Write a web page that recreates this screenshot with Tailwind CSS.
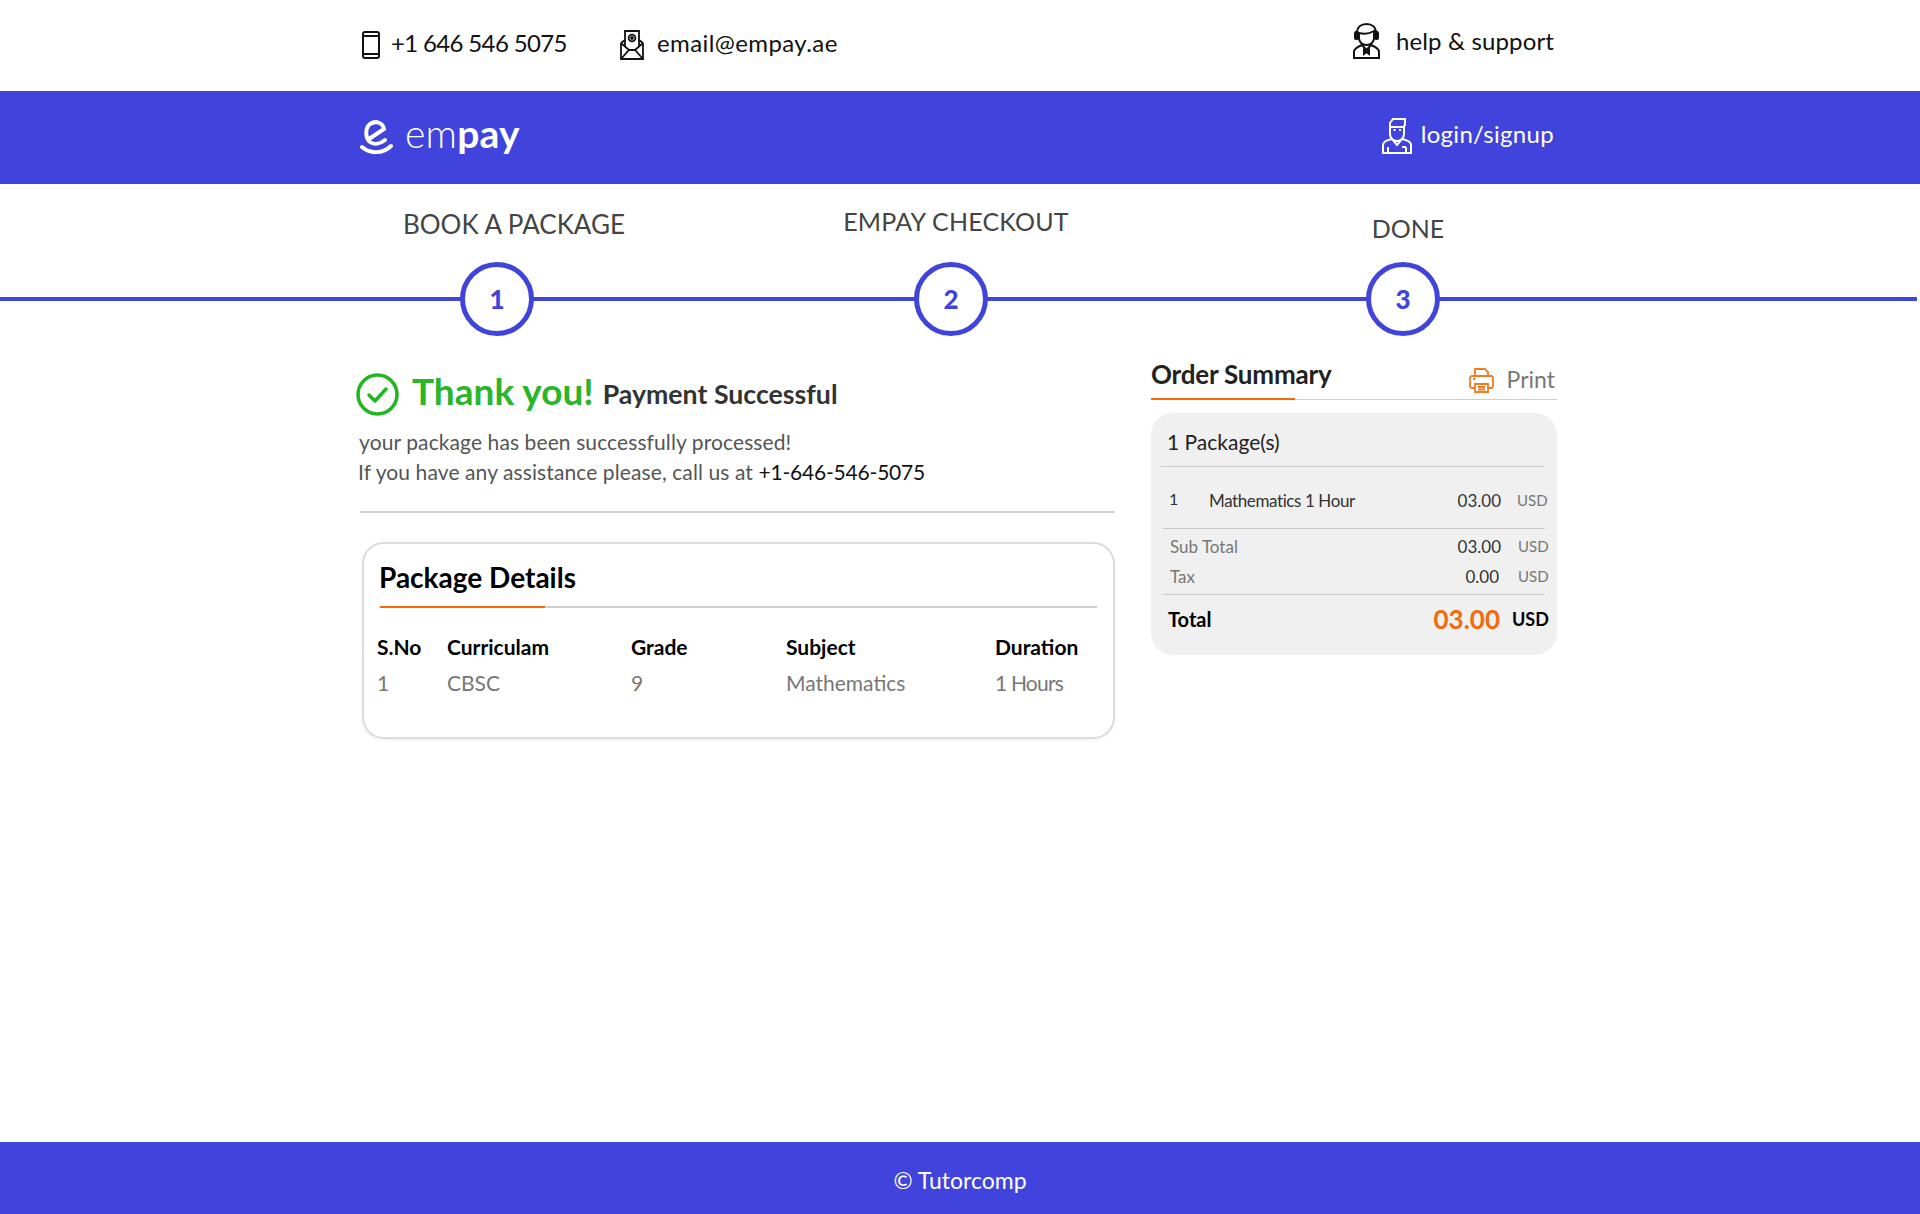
<!DOCTYPE html>
<html lang="en">
<head>
  <meta charset="UTF-8" />
  <title>empay</title>
  <script src="https://cdn.jsdelivr.net/npm/@tailwindcss/browser@4"></script>
</head>
<body class="bg-white font-[Lato,sans-serif] h-[1214px] flex flex-col overflow-hidden">

  <!-- contact bar -->
  <div class="h-[91px] pl-[362px] pr-[366px] flex items-center text-[24px] text-[#111]">
    <svg class="w-[18px] h-[28px] mr-[11px] mb-[2px]" viewBox="0 0 18 28" fill="none" stroke="#111" stroke-width="2"><rect x="1" y="1" width="16" height="26" rx="2"/><path d="M1 5h16M1 23h16"/></svg>
    <span class="w-[229px] mb-[5px] tracking-[-0.65px]">+1 646 546 5075</span>
    <svg class="w-[24px] h-[30px] mr-[13px] mb-[2px]" viewBox="0 0 24 30" fill="none" stroke="#111" stroke-width="1.8"><path d="M1 13v16h22V13M5 16V1h14v15M1 13l4-3M23 13l-4-3M1 29l8-9h6l8 9M1 13l8 7M23 13l-8 7"/><circle cx="12" cy="8" r="3.4"/><circle cx="12" cy="8" r="1" fill="#111"/></svg>
    <span class="mb-[6px] tracking-[0.4px]">email@empay.ae</span>
    <svg class="ml-auto w-[27px] h-[36px] mr-[16px] mb-[9px]" viewBox="0 0 27 36" fill="none" stroke="#111" stroke-width="2"><path d="M4 15V10C4 4 8 1 13.500 1S23 4 23 10v5"/><rect x="2" y="9" width="3" height="7" rx="1"/><rect x="22" y="9" width="3" height="7" rx="1"/><path d="M6 10c4 1 10 1 15-2v7c0 4-3 7-7.500 7S6 19 6 15z"/><path d="M1 35v-6c0-3 3-5 8-7l4.500 5 4.500-5c5 2 8 4 8 7v6zM11 27l2.500 2 2.500-2v4l-2.500-2-2.500 2z"/></svg>
    <span class="mb-[10px] tracking-[0.13px]">help &amp; support</span>
  </div>

  <!-- brand bar -->
  <div class="h-[93px] bg-[#4044dd] pl-[360px] pr-[366px] flex items-center text-white">
    <svg class="w-[33px] h-[36px] mr-[12px] mb-[2px]" viewBox="0 0 33 36" fill="none" stroke="#fff" stroke-width="4" stroke-linecap="round"><path d="M9 20L24 10C23 4 16 1 10 5C5 9 5 19 10 23C14 26 20 25 25 21"/><path d="M2 28C10 35 23 35 31 27"/></svg>
    <span class="text-[39px] leading-none font-light mb-[9px] tracking-[0.2px]">em<span class="font-bold">pay</span></span>
    <svg class="ml-auto w-[30px] h-[36px] mr-[9px] mb-[3px]" viewBox="0 0 30 36" fill="none" stroke="#fff" stroke-width="2"><path d="M8 16V5l3-4h12v6l-1 1v8c0 4-3 7-7 7s-7-3-7-7zM8 9h14M1 35V27c0-3 4-5 9-6l5 6 5-6c5 1 9 3 9 6v8zM6 35v-6M24 35v-6M20 29h4M11.500 12h2M17 12h2"/></svg>
    <span class="text-[24px] tracking-[0.3px] mb-[8px]">login/signup</span>
  </div>

  <!-- steps -->
  <div class="relative h-[156px] pl-[269px] grid grid-cols-[456px_452px_452px] content-start">
    <div class="absolute left-0 right-[3px] top-[113px] h-[4px] bg-[#4044dd]"></div>
    <div class="relative flex flex-col items-center">
      <p class="h-[78px] pt-[24px] pl-[34px] text-[26px] leading-[32px] text-[#444]">BOOK A PACKAGE</p>
      <span class="w-[74px] h-[74px] rounded-full border-[5px] border-[#4044dd] bg-white flex items-center justify-center text-[26px] font-black text-[#4044dd]">1</span>
    </div>
    <div class="relative flex flex-col items-center">
      <p class="h-[78px] pt-[21px] pl-[10px] text-[25px] tracking-[0.2px] leading-[32px] text-[#444]">EMPAY CHECKOUT</p>
      <span class="w-[74px] h-[74px] rounded-full border-[5px] border-[#4044dd] bg-white flex items-center justify-center text-[26px] font-black text-[#4044dd]">2</span>
    </div>
    <div class="relative flex flex-col items-center">
      <p class="h-[78px] pt-[28px] pl-[10px] text-[25px] leading-[32px] text-[#444]">DONE</p>
      <span class="w-[74px] h-[74px] rounded-full border-[5px] border-[#4044dd] bg-white flex items-center justify-center text-[26px] font-black text-[#4044dd]">3</span>
    </div>
  </div>

  <!-- main -->
  <div class="flex-1 flex pl-[356px]">
    <div class="w-[795px]">
      <div class="flex items-center h-[92px] pt-[16px]">
        <svg class="w-[43px] h-[43px] mr-[13px]" viewBox="0 0 43 43" fill="none" stroke="#22b522" stroke-width="3.500"><circle cx="21.500" cy="21.500" r="19.500"/><path d="M13 22l6 6 11-12" stroke-linecap="round" stroke-linejoin="round"/></svg>
        <span class="text-[37px] font-bold text-[#2ab52a] mb-[6px]">Thank you!</span>
        <span class="ml-[9px] text-[26.700px] font-bold text-[#333]">Payment Successful</span>
      </div>
      <p class="pl-[3px] mt-[-6px] text-[21px] tracking-[0.1px] leading-[31px] text-[#555]">your package has been successfully processed!</p>
      <p class="pl-[2px] text-[21px] tracking-[0.1px] leading-[30px] text-[#555]">If you have any assistance please, call us at <span class="text-[#111] tracking-[-0.2px]">+1-646-546-5075</span></p>
      <div class="ml-[4px] w-[755px] mt-[24px] h-[2px] bg-[#cfcfcf]"></div>

      <div class="ml-[6px] mt-[29px] w-[753px] h-[197px] rounded-[22px] border-2 border-[#dcdcdc] shadow-[0_1px_3px_rgba(0,0,0,0.08)] pl-[13px] pr-[16px]">
        <h2 class="h-[62px] pt-[16px] pl-[2px] text-[28px] leading-[34px] font-bold text-black">Package Details</h2>
        <div class="ml-[3px] h-[2px] bg-[#cfcfcf]"><div class="w-[165px] h-[2px] bg-[#f26a0c]"></div></div>
        <div class="grid grid-cols-[70px_184px_155px_209px_1fr] mt-[21px] text-[21px] leading-[36px]">
          <span class="font-bold text-black">S.No</span>
          <span class="font-bold text-black">Curriculam</span>
          <span class="font-bold text-black">Grade</span>
          <span class="font-bold text-black">Subject</span>
          <span class="font-bold text-black">Duration</span>
          <span class="text-[#777]">1</span>
          <span class="text-[#777]">CBSC</span>
          <span class="text-[#777]">9</span>
          <span class="text-[#777]">Mathematics</span>
          <span class="text-[#777] tracking-[-0.8px]">1 Hours</span>
        </div>
      </div>
    </div>

    <div class="w-[406px]">
      <div class="flex items-end h-[60px] border-b border-[#cfcfcf] relative">
        <span class="w-[144px] h-[2px] bg-[#f26a0c] absolute left-0 bottom-[-1px]"></span>
        <span class="text-[26px] tracking-[-0.2px] font-bold text-[#222] leading-[34px] pb-[8px]">Order Summary</span>
        <svg class="ml-auto w-[25px] h-[25px] mr-[13px] mb-[6px]" viewBox="0 0 25 25" fill="none" stroke="#f47a1f" stroke-width="1.800"><path d="M6 8V1h10l3 3v4M6 20H3a2 2 0 0 1-2-2V10a2 2 0 0 1 2-2h19a2 2 0 0 1 2 2v8a2 2 0 0 1-2 2h-3"/><path d="M6 16h13v8H6zM9 19h7M9 21.500h7M4 11h2"/></svg>
        <span class="text-[23px] text-[#777] leading-[32px] pr-[2px] pb-[4px]">Print</span>
      </div>

      <div class="mt-[13px] h-[242px] bg-[#f0f0f0] rounded-[22px] px-[10px]">
        <p class="h-[54px] pl-[6px] pt-[15px] text-[21px] leading-[28px] text-[#222] border-b border-[#c9c9c9] mr-[3px]">1 Package(s)</p>
        <div class="h-[62px] flex items-center text-[17px] border-b border-[#c9c9c9] pt-[6px] ml-[2px] mr-[2px]">
          <span class="w-[46px] pl-[6px] text-[16px] text-[#333] mb-[3px]">1</span>
          <span class="text-[#333] tracking-[-0.4px]">Mathematics 1 Hour</span>
          <span class="ml-auto w-[44px] text-right text-[#333]">03.00</span>
          <span class="w-[47px] mr-[-3px] pl-[16px] text-[15px] text-[#777]">USD</span>
        </div>
        <div class="flex items-center h-[32px] mx-[2px] text-[17px] pl-[7px] pt-[3px]">
          <span class="text-[#777]">Sub Total</span>
          <span class="ml-auto w-[44px] text-right text-[#333]">03.00</span>
          <span class="w-[47px] mr-[-3px] pl-[17px] text-[15px] text-[#777]">USD</span>
        </div>
        <div class="flex items-center h-[34px] mx-[2px] text-[17px] pl-[7px] pb-[2px] border-b border-[#c9c9c9]">
          <span class="text-[#777]">Tax</span>
          <span class="ml-auto w-[44px] pr-[2px] text-right text-[#333]">0.00</span>
          <span class="w-[47px] mr-[-3px] pl-[17px] text-[15px] text-[#777]">USD</span>
        </div>
        <div class="flex items-center h-[48px] ml-[7px] mr-[-3px]">
          <span class="text-[20px] font-bold text-black">Total</span>
          <span class="ml-auto text-[26px] font-bold text-[#f26a0c]">03.00</span>
          <span class="w-[50px] pl-[12px] text-[18px] font-bold text-black">USD</span>
        </div>
      </div>
    </div>
  </div>

  <!-- footer -->
  <div class="h-[72px] bg-[#4044dd] flex items-center justify-center pt-[5px] text-[23px] text-white">© Tutorcomp</div>
</body>
</html>
